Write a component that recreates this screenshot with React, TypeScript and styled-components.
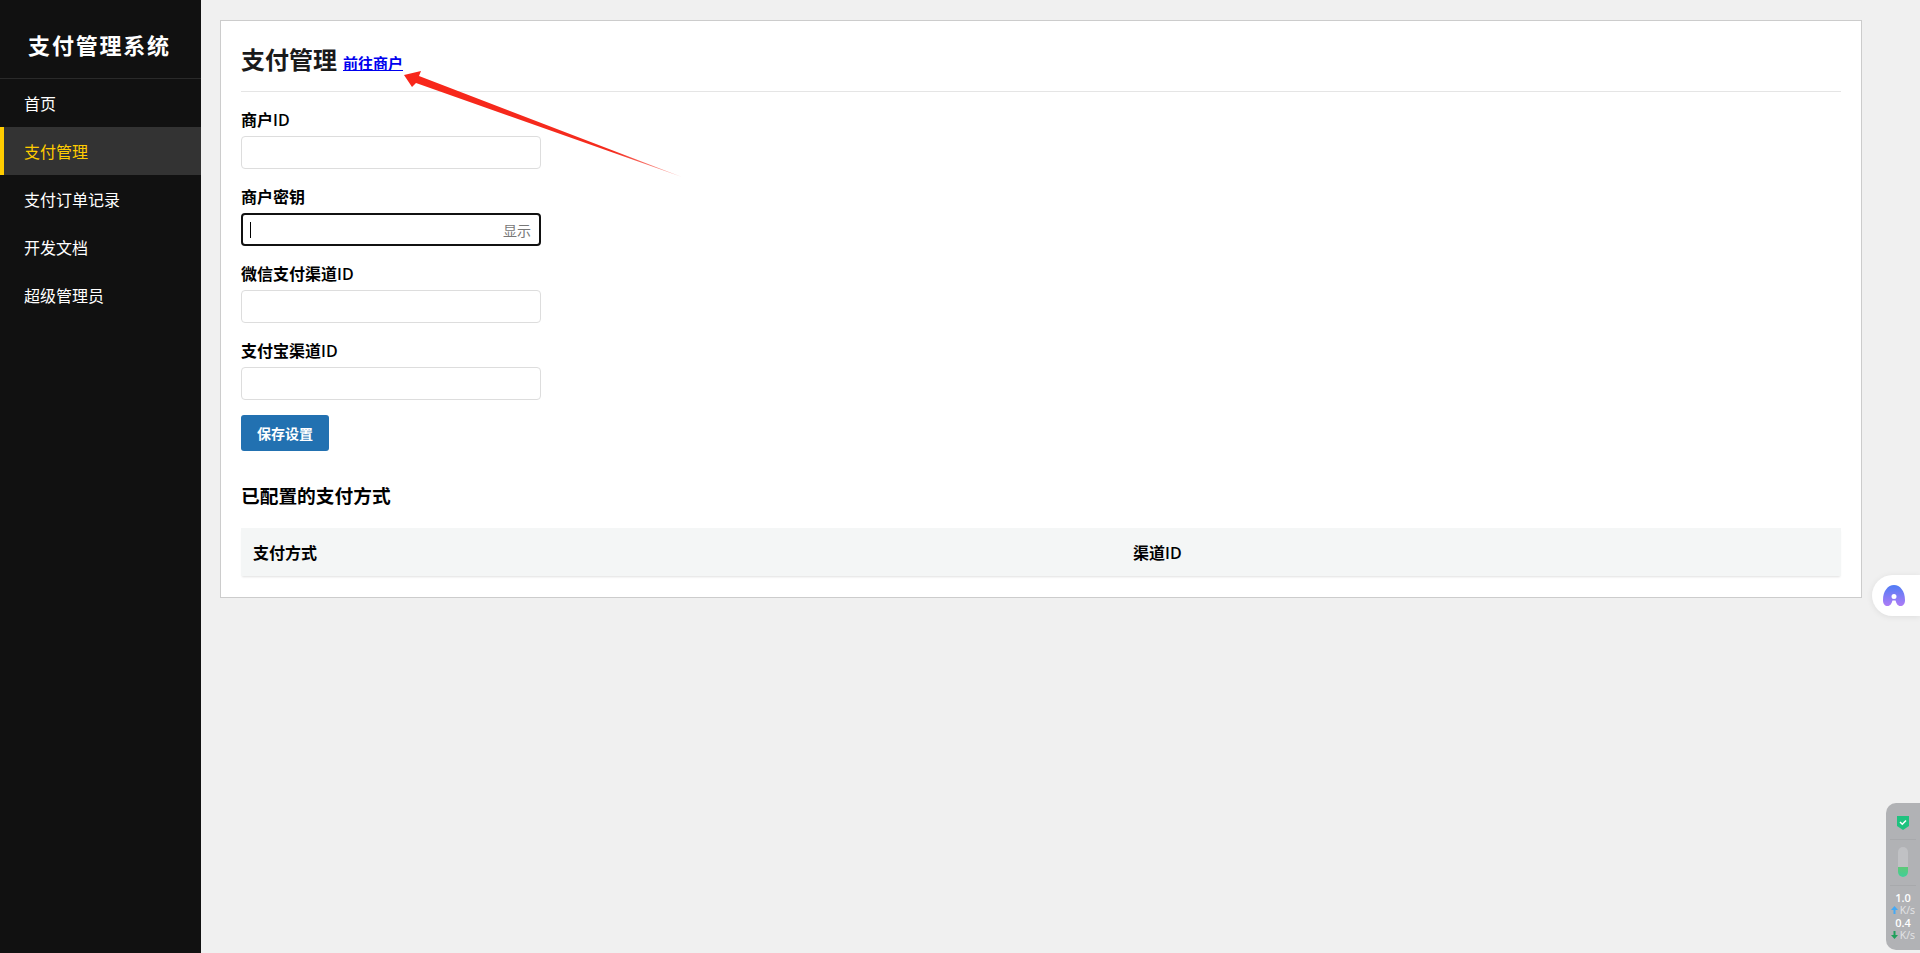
import React from "react";
import styled, { createGlobalStyle } from "styled-components";

const Global = createGlobalStyle`
  html, body { margin: 0; padding: 0; height: 100%; }
  body { background: #f0f0f0; font-family: "Open Sans", "Noto Sans CJK SC", sans-serif; color: #000; overflow: hidden; }
  * { box-sizing: border-box; }
`;

const Shell = styled.div`
  display: flex;
  min-height: 953px;
`;
const Sidebar = styled.aside`
  width: 201px;
  flex: none;
  background: #111;
  color: #fff;
`;
const Brand = styled.div`
  height: 79px;
  border-bottom: 1px solid #2a2a2a;
  display: flex;
  align-items: center;
  justify-content: center;
  font-size: 22px;
  font-weight: 700;
  letter-spacing: 1.8px;
  padding-top: 10px;
  padding-right: 2px;
`;
const Menu = styled.nav`
  display: flex;
  flex-direction: column;
`;
const MenuItem = styled.a<{ $active?: boolean }>`
  height: 48px;
  display: flex;
  align-items: center;
  font-size: 16px;
  padding-left: ${(p) => (p.$active ? "20px" : "24px")};
  color: ${(p) => (p.$active ? "#ffcc00" : "#fff")};
  background: ${(p) => (p.$active ? "#333" : "transparent")};
  border-left: ${(p) => (p.$active ? "4px solid #ffcc00" : "none")};
`;
const Main = styled.main`
  flex: 1;
  padding: 20px 58px 0 19px;
`;
const Card = styled.section`
  background: #fff;
  border: 1px solid #ccc;
  padding: 20px;
  height: 578px;
`;
const TitleRow = styled.header`
  display: flex;
  align-items: baseline;
  gap: 6px;
  height: 51px;
  border-bottom: 1px solid #e5e5e5;
  padding-top: 1px;
`;
const Title = styled.h1`
  margin: 0;
  font-size: 24px;
  line-height: 36px;
  font-weight: 700;
  color: #1a1a1a;
`;
const MerchantLink = styled.a`
  font-size: 15px;
  font-weight: 700;
  color: #0000ee;
  text-decoration: underline;
`;
const Form = styled.form`
  display: flex;
  flex-direction: column;
  gap: 15px;
  padding-top: 15px;
`;
const Field = styled.div`
  display: flex;
  flex-direction: column;
  gap: 5px;
`;
const Label = styled.label`
  font-size: 16px;
  line-height: 27px;
  height: 24px;
  font-weight: 600;
  color: #000;
`;
const InputBox = styled.div<{ $focus?: boolean }>`
  width: 300px;
  height: 33px;
  background: #fff;
  border-radius: 4px;
  border: ${(p) => (p.$focus ? "2px solid #111" : "1px solid #ddd")};
  display: flex;
  align-items: center;
  justify-content: space-between;
  padding: 0 8px 0 7px;
`;
const Caret = styled.span`
  width: 1px;
  height: 16px;
  background: #000;
`;
const Toggle = styled.span`
  font-size: 14px;
  color: #777;
  padding-top: 1px;
`;
const SaveButton = styled.button`
  width: 88px;
  height: 36px;
  border: none;
  border-radius: 3px;
  background: #2271b1;
  color: #fff;
  font: 600 14px "Open Sans", "Noto Sans CJK SC", sans-serif;
  padding: 0;
`;
const SubTitle = styled.h2`
  margin: 31px 0 0;
  font-size: 18.720px;
  line-height: 27px;
  font-weight: 700;
`;
const Table = styled.table`
  width: 100%;
  margin-top: 19px;
  border-collapse: collapse;
  table-layout: fixed;
  box-shadow: 0 2px 2px -1px rgba(0, 0, 0, 0.12);
`;
const Th = styled.th`
  height: 48px;
  padding: 0 12px;
  text-align: left;
  background: #f4f6f6;
  font-size: 16px;
  font-weight: 600;
  &:first-child { width: 55%; }
`;
const Arrow = styled.svg`
  position: absolute;
  left: 395px;
  top: 65px;
`;
const AssistantPill = styled.div`
  position: absolute;
  right: 0;
  top: 575px;
  width: 48px;
  height: 41px;
  background: #fff;
  border-radius: 21px 0 0 21px;
  box-shadow: 0 1px 6px rgba(0, 0, 0, 0.08);
  display: flex;
  align-items: center;
  padding-left: 11px;
`;
const SpeedWidget = styled.div`
  position: absolute;
  right: 0;
  top: 803px;
  width: 34px;
  height: 147px;
  background: #b1b2b5;
  border-radius: 10px 0 0 10px;
  display: flex;
  flex-direction: column;
  align-items: center;
`;
const ShieldSlot = styled.div`
  width: 26px;
  height: 37px;
  border-bottom: 1px solid #a8a9ac;
  display: flex;
  justify-content: center;
  padding-top: 13px;
`;
const MeterSlot = styled.div`
  width: 26px;
  height: 46px;
  border-bottom: 1px solid #a8a9ac;
  display: flex;
  justify-content: center;
  padding-top: 7px;
`;
const Meter = styled.div`
  width: 10px;
  height: 30px;
  border-radius: 5px;
  background: #c0c1c4;
  overflow: hidden;
  display: flex;
  align-items: flex-end;
`;
const MeterFill = styled.div`
  width: 100%;
  height: 10px;
  background: linear-gradient(#5fc878, #3fcf98);
`;
const Speed = styled.div`
  font-size: 11px;
  line-height: 12px;
  font-weight: 600;
  color: #fff;
  margin-top: 6px;
`;
const Unit = styled.div`
  font-size: 10.500px;
  line-height: 12px;
  color: #e4e5e7;
  display: flex;
  align-items: center;
  gap: 2px;
`;
const SecondSpeed = styled(Speed)`
  margin-top: 1px;
`;

const rows = ["微信支付渠道ID", "支付宝渠道ID"];

export default function App() {
  return (
    <>
      <Global />
      <Shell>
        <Sidebar>
          <Brand>支付管理系统</Brand>
          <Menu>
            <MenuItem>首页</MenuItem>
            <MenuItem $active>支付管理</MenuItem>
            <MenuItem>支付订单记录</MenuItem>
            <MenuItem>开发文档</MenuItem>
            <MenuItem>超级管理员</MenuItem>
          </Menu>
        </Sidebar>
        <Main>
          <Card>
            <TitleRow>
              <Title>支付管理</Title>
              <MerchantLink href="#">前往商户</MerchantLink>
            </TitleRow>
            <Form>
              <Field>
                <Label>商户ID</Label>
                <InputBox />
              </Field>
              <Field>
                <Label>商户密钥</Label>
                <InputBox $focus>
                  <Caret />
                  <Toggle>显示</Toggle>
                </InputBox>
              </Field>
              {rows.map((r) => (
                <Field key={r}>
                  <Label>{r}</Label>
                  <InputBox />
                </Field>
              ))}
              <SaveButton type="button">保存设置</SaveButton>
            </Form>
            <SubTitle>已配置的支付方式</SubTitle>
            <Table>
              <thead>
                <tr>
                  <Th>支付方式</Th>
                  <Th>渠道ID</Th>
                </tr>
              </thead>
            </Table>
          </Card>
        </Main>
      </Shell>
      <Arrow width="295" height="120" viewBox="0 0 295 120">
        <defs>
          <linearGradient id="arrowFade" x1="9" y1="10" x2="287" y2="112" gradientUnits="userSpaceOnUse">
            <stop offset="0" stopColor="#f8261a" />
            <stop offset="0.75" stopColor="#f42c1e" />
            <stop offset="1" stopColor="#f42c1e" stopOpacity="0.35" />
          </linearGradient>
        </defs>
        <path d="M9 10 L26 6 L24 11 L287 112 L21 18 L17 22 Z" fill="url(#arrowFade)" />
      </Arrow>
      <AssistantPill>
        <svg width="22" height="21" viewBox="0 0 22 21">
          <defs>
            <linearGradient id="logoFill" x1="0" y1="0" x2="0" y2="1">
              <stop offset="0" stopColor="#4f7cf5" />
              <stop offset="1" stopColor="#ad7cf6" />
            </linearGradient>
          </defs>
          <path
            fillRule="evenodd"
            d="M11 0C5 0 0 6 0 15C0 19 2 21 4.500 21C7.500 21 8.500 18.500 9.500 15.500L12.500 15.500C13.500 18.500 14.500 21 17.500 21C20 21 22 19 22 15C22 6 17 0 11 0ZM11 9A2.500 2.500 0 1 1 11 14A2.500 2.500 0 1 1 11 9Z"
            fill="url(#logoFill)"
          />
        </svg>
      </AssistantPill>
      <SpeedWidget>
        <ShieldSlot>
          <svg width="12" height="14" viewBox="0 0 12 14">
            <path d="M0 0H12V10L6 14L0 10Z" fill="#1fc27f" />
            <path d="M3 6L5.300 8.200L9 4.500" fill="none" stroke="#fff" strokeWidth="1.500" />
          </svg>
        </ShieldSlot>
        <MeterSlot>
          <Meter>
            <MeterFill />
          </Meter>
        </MeterSlot>
        <Speed>1.0</Speed>
        <Unit>
          <svg width="7" height="8" viewBox="0 0 7 8">
            <path d="M3.500 0L7 4H4.500V8H2.500V4H0Z" fill="#45a9f5" />
          </svg>
          K/s
        </Unit>
        <SecondSpeed>0.4</SecondSpeed>
        <Unit>
          <svg width="7" height="8" viewBox="0 0 7 8">
            <path d="M3.500 8L7 4H4.500V0H2.500V4H0Z" fill="#1fa05a" />
          </svg>
          K/s
        </Unit>
      </SpeedWidget>
    </>
  );
}
